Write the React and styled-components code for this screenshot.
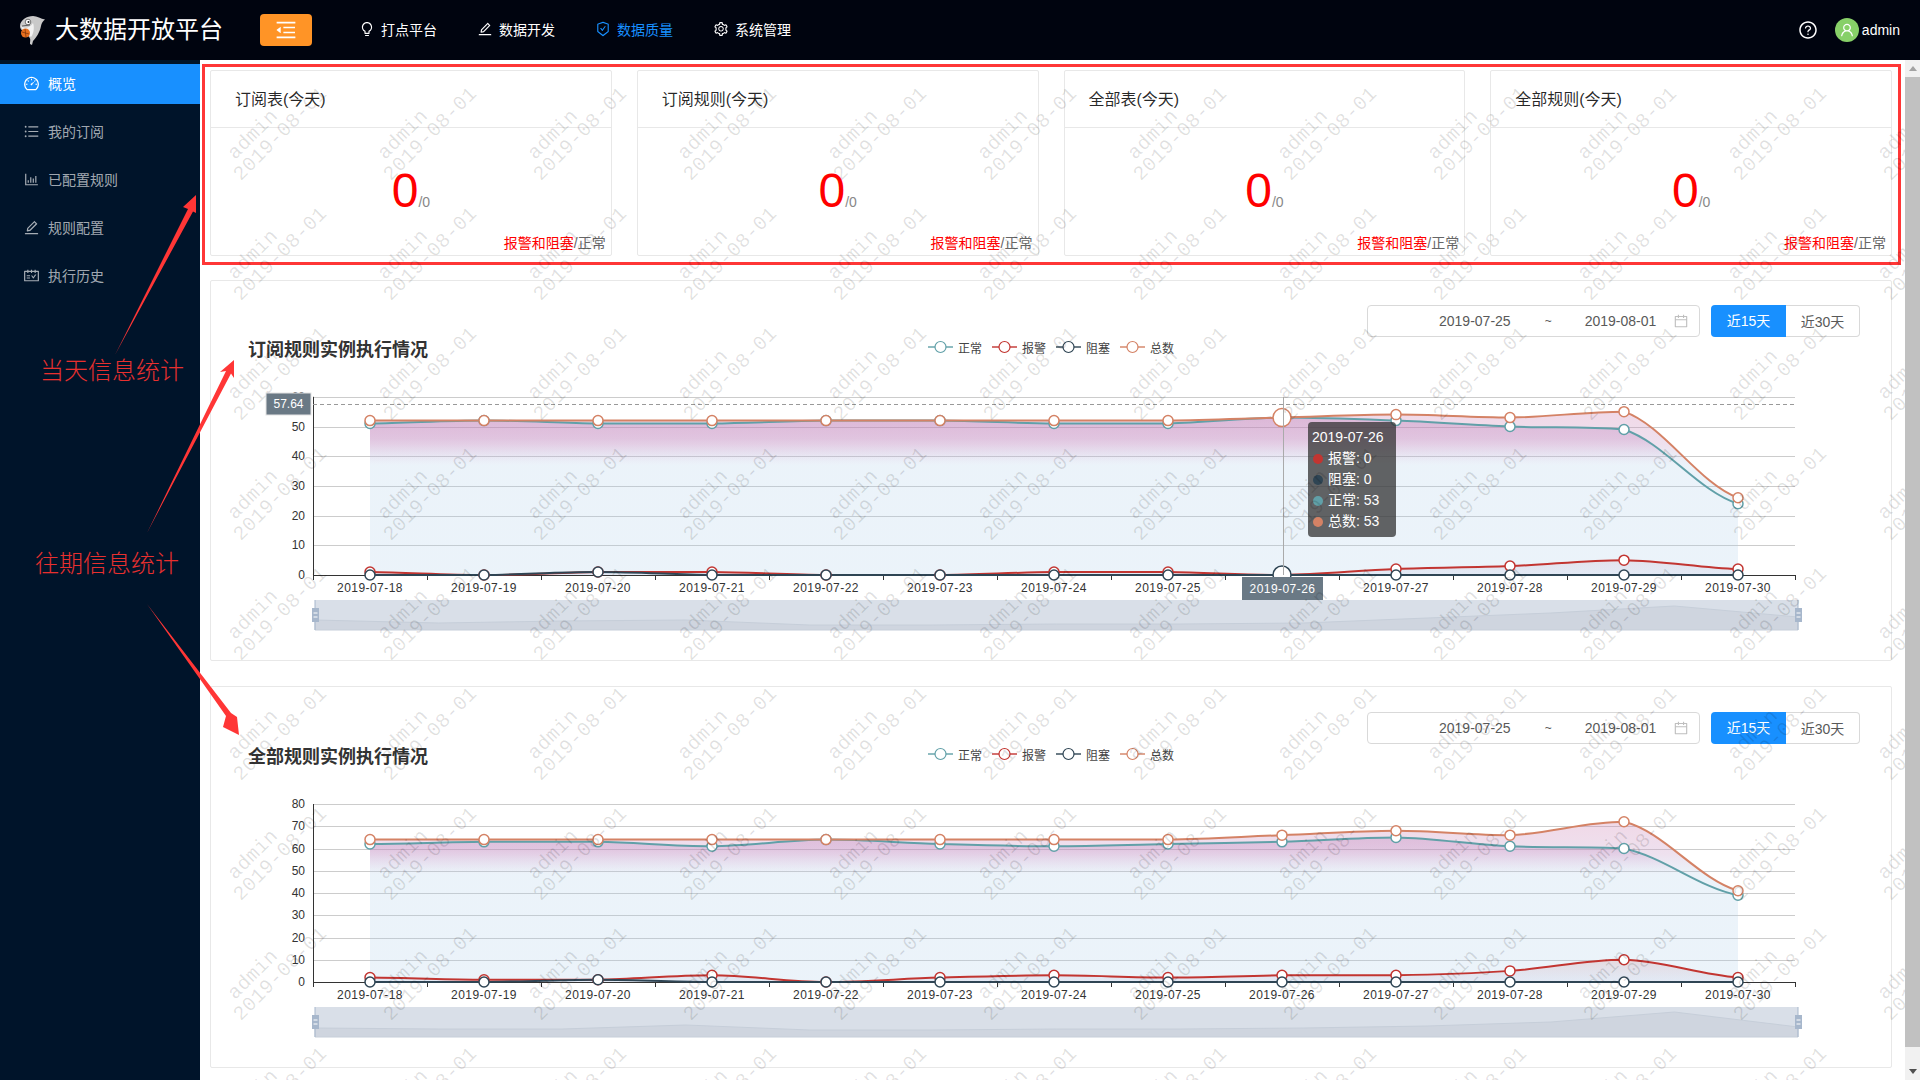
import React from "react";
import styled, { createGlobalStyle } from "styled-components";
import {
  AiOutlineBarChart,
  AiOutlineBars,
  AiOutlineBulb,
  AiOutlineCalendar,
  AiOutlineDashboard,
  AiOutlineEdit,
  AiOutlineMenuFold,
  AiOutlineQuestionCircle,
  AiOutlineSafetyCertificate,
  AiOutlineSchedule,
  AiOutlineSetting,
  AiOutlineUser,
} from "react-icons/ai";

const FONT = `"Liberation Sans", "Noto Sans CJK SC", sans-serif`;

const GlobalStyle = createGlobalStyle`
  html, body {
    margin: 0;
    height: 100%;
    overflow: hidden;
    background: #fff;
    font-family: ${FONT};
  }
  * { box-sizing: border-box; }
`;

const Page = styled.div`
  position: relative;
  width: 1920px;
  height: 1080px;
  display: flex;
  flex-direction: column;
  overflow: hidden;
`;

/* header */
const TopBar = styled.header`
  height: 60px;
  flex: none;
  display: flex;
  align-items: center;
  background: #00040f;
  color: #fff;
`;
const Logo = styled.svg`
  width: 31px;
  height: 31px;
  margin-left: 15px;
  flex: none;
`;
const Brand = styled.div`
  margin-left: 9px;
  width: 205px;
  font-size: 24px;
  line-height: 60px;
  white-space: nowrap;
`;
const FoldButton = styled.div`
  width: 52px;
  height: 32px;
  display: flex;
  align-items: center;
  justify-content: center;
  background: #ff9426;
  border-radius: 4px;
  font-size: 24px;
`;
const TopNav = styled.nav`
  display: flex;
  margin-left: 47px;
  gap: 40px;
  padding-bottom: 2px;
`;
const TopNavItem = styled.div`
  display: flex;
  align-items: center;
  gap: 6px;
  font-size: 14px;
  color: ${(p) => (p.$active ? "#1890ff" : "#fff")};
`;
const TopRight = styled.div`
  margin-left: auto;
  display: flex;
  align-items: center;
  padding-right: 20px;
  font-size: 14px;
`;
const HelpIcon = styled(AiOutlineQuestionCircle)`
  font-size: 20px;
  margin-right: 17px;
`;
const Avatar = styled.div`
  width: 24px;
  height: 24px;
  border-radius: 50%;
  background: #87d068;
  display: flex;
  align-items: center;
  justify-content: center;
  font-size: 16px;
  margin-right: 3px;
`;

/* sidebar */
const Body = styled.div`
  flex: 1;
  min-height: 0;
  display: flex;
`;
const Sidebar = styled.aside`
  width: 200px;
  flex: none;
  background: #00142a;
  padding-top: 4px;
`;
const MenuItem = styled.div`
  height: 40px;
  margin-bottom: 8px;
  padding: 0 0 2px 23px;
  display: flex;
  align-items: center;
  gap: 8px;
  font-size: 14px;
  color: ${(p) => (p.$active ? "#fff" : "rgba(255,255,255,0.65)")};
  background: ${(p) => (p.$active ? "#1890ff" : "transparent")};
`;

/* main */
const Main = styled.main`
  position: relative;
  flex: 1;
  min-width: 0;
  overflow: hidden;
  background: #fff;
`;
const StatFrame = styled.section`
  margin: 4px 4px 0 2px;
  padding: 3px 6px 6px 5px;
  border: 3px solid #ff3636;
  display: grid;
  grid-template-columns: repeat(4, 1fr);
  gap: 25px;
`;
const StatCard = styled.div`
  height: 186px;
  border: 1px solid #e8e8e8;
  border-radius: 2px;
  display: flex;
  flex-direction: column;
`;
const StatTitle = styled.div`
  height: 57px;
  flex: none;
  padding-left: 24px;
  border-bottom: 1px solid #e8e8e8;
  font-size: 16px;
  line-height: 58px;
  color: rgba(0, 0, 0, 0.85);
`;
const StatValue = styled.div`
  margin-top: 33px;
  height: 60px;
  display: flex;
  align-items: baseline;
  justify-content: center;
  line-height: 60px;
`;
const BigNumber = styled.span`
  font-size: 48px;
  color: #ff0000;
`;
const SmallNumber = styled.span`
  font-size: 14px;
  color: #888;
`;
const StatFoot = styled.div`
  margin-top: auto;
  padding: 0 5px 1px 0;
  text-align: right;
  font-size: 14px;
  line-height: 22px;
  color: #666;
  span {
    color: #ff0000;
  }
`;

const ChartCard = styled.section`
  position: relative;
  margin: ${(p) => p.$top}px 13px 0 10px;
  padding-top: ${(p) => p.$pad}px;
  border: 1px solid #e8e8e8;
  border-radius: 2px;
`;
const Controls = styled.div`
  display: flex;
  justify-content: flex-end;
  gap: 11px;
  padding-right: 31px;
`;
const RangePicker = styled.div`
  width: 333px;
  height: 32px;
  padding: 0 10px 0 71px;
  display: flex;
  align-items: center;
  border: 1px solid #d9d9d9;
  border-radius: 4px;
  font-size: 14px;
  color: #595959;
  svg {
    margin-left: auto;
    color: #bfbfbf;
    font-size: 16px;
  }
`;
const RangeDash = styled.span`
  margin: 0 35px 0 34px;
  width: 5px;
  font-size: 12px;
  text-align: center;
`;
const SpanGroup = styled.div`
  display: flex;
`;
const SpanButton = styled.div`
  width: ${(p) => (p.$active ? 75 : 74)}px;
  height: 32px;
  text-align: center;
  font-size: 14px;
  line-height: 32px;
  color: ${(p) => (p.$active ? "#fff" : "#595959")};
  background: ${(p) => (p.$active ? "#1890ff" : "#fff")};
  border: ${(p) => (p.$active ? "none" : "1px solid #d9d9d9")};
  border-left: none;
  border-radius: ${(p) => (p.$active ? "4px 0 0 4px" : "0 4px 4px 0")};
`;
const TitleRow = styled.div`
  height: 24px;
  padding: 2px 0 0 37px;
  display: flex;
  align-items: center;
`;
const ChartTitle = styled.h3`
  margin: 0;
  width: 180px;
  font-size: 18px;
  font-weight: 700;
  line-height: 24px;
  color: #333;
`;
const Legend = styled.div`
  margin: -6px 0 0 500px;
  display: flex;
  gap: 10px;
`;
const LegendItem = styled.div`
  display: flex;
  align-items: center;
  gap: 5px;
  font-size: 12px;
  color: #444;
`;
const Plot = styled.svg`
  display: block;
  width: 1680px;
  height: 299px;
`;
const Tooltip = styled.div`
  position: absolute;
  left: 1097px;
  top: 141px;
  width: 88px;
  height: 115px;
  padding: 5px 4px;
  border-radius: 4px;
  background: rgba(50, 50, 50, 0.75);
  color: #fff;
  font-size: 14px;
  line-height: 21px;
  white-space: nowrap;
`;
const TipRow = styled.div`
  display: flex;
  align-items: center;
  gap: 5px;
  &::before {
    content: "";
    width: 10px;
    height: 10px;
    margin-left: 1px;
    border-radius: 50%;
    background: ${(p) => p.$color};
  }
`;

/* scrollbar strip */
const ScrollStrip = styled.div`
  width: 15px;
  flex: none;
  display: flex;
  flex-direction: column;
  background: #f1f1f1;
`;
const ScrollArrow = styled.div`
  height: 17px;
  flex: none;
  display: flex;
  align-items: center;
  justify-content: center;
  &::before {
    content: "";
    border-left: 4px solid transparent;
    border-right: 4px solid transparent;
    ${(p) => (p.$down ? "border-top: 5px solid #505050;" : "border-bottom: 5px solid #a3a3a3;")}
  }
`;
const ScrollThumb = styled.div`
  flex: 1;
  margin-bottom: 16px;
  background: #c1c1c1;
`;

/* watermark + notes lying over the page */
const Watermark = styled.div`
  position: absolute;
  inset: 7px 0 0 -1px;
  display: grid;
  grid-template-columns: repeat(12, 150px);
  grid-auto-rows: 120px;
  pointer-events: none;
`;
const MarkTile = styled.div`
  display: flex;
  flex-direction: column;
  align-items: flex-start;
  justify-content: center;
  width: 124px;
  justify-self: center;
  align-self: center;
  transform: rotate(-45deg);
  font-family: "Liberation Mono", monospace;
  font-size: 20px;
  line-height: 19px;
  letter-spacing: 0.3px;
  white-space: nowrap;
  color: rgba(0, 0, 0, 0.12);
  span:first-child {
    margin-left: 11px;
  }
`;
const NoteArrows = styled.svg`
  position: absolute;
  left: 0;
  top: 0;
  width: 1920px;
  height: 1080px;
  pointer-events: none;
`;
const NoteText = styled.div`
  position: absolute;
  left: ${(p) => p.$x}px;
  top: ${(p) => p.$y}px;
  font-size: 24px;
  line-height: 30px;
  font-weight: 300;
  color: #e8302f;
  white-space: nowrap;
`;

const COLORS = { normal: "#61a0a8", alarm: "#c23531", block: "#2f4554", total: "#d48265" };
const DATES = ["07-18", "07-19", "07-20", "07-21", "07-22", "07-23", "07-24", "07-25", "07-26", "07-27", "07-28", "07-29", "07-30"].map(
  (d) => `2019-${d}`
);

const CHART_A = {
  id: "a",
  y0: 575,
  unit: 2.97,
  max: 60,
  top: 361,
  gradTop: 412,
  data: {
    normal: [51, 52, 51, 51, 52, 52, 51, 51, 53, 52, 50, 49, 24],
    alarm: [1, 0, 1, 1, 0, 0, 1, 1, 0, 2, 3, 5, 2],
    block: [0, 0, 1, 0, 0, 0, 0, 0, 0, 0, 0, 0, 0],
    total: [52, 52, 52, 52, 52, 52, 52, 52, 53, 54, 53, 55, 26],
  },
  mini: [10, 7, 9, 10, 5, 5, 6, 6, 7, 12, 17, 24, 13],
  zoomY: 600,
  hover: true,
};
const CHART_B = {
  id: "b",
  y0: 982,
  unit: 2.225,
  max: 80,
  top: 768,
  gradTop: 822,
  data: {
    normal: [62, 63, 63, 61, 64, 62, 61, 62, 63, 65, 61, 60, 39],
    alarm: [2, 1, 1, 3, 0, 2, 3, 2, 3, 3, 5, 10, 2],
    block: [0, 0, 1, 0, 0, 0, 0, 0, 0, 0, 0, 0, 0],
    total: [64, 64, 64, 64, 64, 64, 64, 64, 66, 68, 66, 72, 41],
  },
  mini: [9, 8, 8, 12, 7, 7, 8, 8, 9, 11, 15, 25, 10],
  zoomY: 1007,
  hover: false,
};

const AXIS_X = 313;
const BAND = 114;
const catX = (i) => AXIS_X + BAND * i + BAND / 2;

// echarts-ish smooth line through the points
function smooth(points) {
  let d = `M${points[0][0]} ${points[0][1]}`;
  for (let i = 0; i < points.length - 1; i++) {
    const p0 = points[Math.max(i - 1, 0)];
    const p1 = points[i];
    const p2 = points[i + 1];
    const p3 = points[Math.min(i + 2, points.length - 1)];
    const k = 0.17;
    const lo = Math.min(p1[1], p2[1]);
    const hi = Math.max(p1[1], p2[1]);
    const c1y = Math.min(hi, Math.max(lo, p1[1] + (p2[1] - p0[1]) * k));
    const c2y = Math.min(hi, Math.max(lo, p2[1] - (p3[1] - p1[1]) * k));
    d += ` C${p1[0] + BAND * 0.35} ${c1y} ${p2[0] - BAND * 0.35} ${c2y} ${p2[0]} ${p2[1]}`;
  }
  return d;
}

function Chart({ cfg }) {
  const y = (v) => cfg.y0 - v * cfg.unit;
  const pts = (k) => cfg.data[k].map((v, i) => [catX(i), y(v)]);
  const area = (k) => `${smooth(pts(k))} L${catX(12)} ${cfg.y0} L${catX(0)} ${cfg.y0} Z`;
  const ticks = [];
  for (let v = 0; v <= cfg.max; v += 10) ticks.push(v);
  const zoomW = 1483;
  const miniPts = cfg.mini.map((h, i) => `${315 + (i * zoomW) / 12},${cfg.zoomY + 30 - h}`).join(" ");
  const right = AXIS_X + BAND * 13;

  return (
    <Plot viewBox={`211 ${cfg.top} 1680 299`}>
      <defs>
        <linearGradient id={`${cfg.id}-total`} gradientUnits="userSpaceOnUse" x1="0" x2="0" y1={cfg.gradTop} y2={cfg.y0}>
          <stop offset="0" stopColor="#cf7fb0" stopOpacity="0.3" />
          <stop offset="0.2" stopColor="#c79ac8" stopOpacity="0.3" />
          <stop offset="0.33" stopColor="#a9cbe8" stopOpacity="0.23" />
          <stop offset="1" stopColor="#a9cbe8" stopOpacity="0.23" />
        </linearGradient>
        <linearGradient id={`${cfg.id}-normal`} gradientUnits="userSpaceOnUse" x1="0" x2="0" y1={cfg.gradTop + 8} y2={cfg.y0}>
          <stop offset="0" stopColor="#b878b8" stopOpacity="0.34" />
          <stop offset="0.12" stopColor="#b878b8" stopOpacity="0.26" />
          <stop offset="0.28" stopColor="#b8b8e0" stopOpacity="0" />
        </linearGradient>
        <linearGradient id={`${cfg.id}-alarm`} gradientUnits="userSpaceOnUse" x1="0" x2="0" y1={y(10)} y2={cfg.y0}>
          <stop offset="0" stopColor="#c23531" stopOpacity="0.14" />
          <stop offset="1" stopColor="#8080c0" stopOpacity="0.08" />
        </linearGradient>
      </defs>

      {ticks.map((v) => (
        <line key={v} x1={AXIS_X} x2={right} y1={Math.round(y(v)) + 0.5} y2={Math.round(y(v)) + 0.5} stroke="#ccc" />
      ))}
      <path d={area("total")} fill={`url(#${cfg.id}-total)`} />
      <path d={area("normal")} fill={`url(#${cfg.id}-normal)`} />
      <path d={area("alarm")} fill={`url(#${cfg.id}-alarm)`} />

      <line x1={AXIS_X + 0.5} x2={AXIS_X + 0.5} y1={y(cfg.max)} y2={cfg.y0} stroke="#333" />
      <line x1={AXIS_X} x2={right} y1={cfg.y0 + 0.5} y2={cfg.y0 + 0.5} stroke="#333" />
      {DATES.concat("").map((d, i) => (
        <line key={i} x1={AXIS_X + BAND * i + 0.5} x2={AXIS_X + BAND * i + 0.5} y1={cfg.y0} y2={cfg.y0 + 5} stroke="#333" />
      ))}
      {ticks.map((v) => (
        <text key={v} x="305" y={y(v) + 4} textAnchor="end" fontSize="12" fill="#333" fontFamily={FONT}>
          {v}
        </text>
      ))}
      {DATES.map((d, i) => (
        <text key={d} x={catX(i)} y={cfg.y0 + 17} textAnchor="middle" fontSize="12" letterSpacing="0.45" fill="#333" fontFamily={FONT}>
          {d}
        </text>
      ))}

      {["normal", "alarm", "block", "total"].map((k) => (
        <path key={k} d={smooth(pts(k))} fill="none" stroke={COLORS[k]} strokeWidth="2" />
      ))}
      {["normal", "alarm", "block", "total"].map((k) =>
        pts(k).map(([px, py], i) => {
          const big = cfg.hover && i === 8 && (k === "total" || k === "block");
          return <circle key={k + i} cx={px} cy={py} r={big ? 9 : 5} fill="#fff" stroke={COLORS[k]} strokeWidth="1.5" />;
        })
      )}

      {/* data zoom */}
      <rect x="315" y={cfg.zoomY} width={zoomW} height="30" fill="#d9dfe8" />
      <polygon points={`315,${cfg.zoomY + 30} ${miniPts} ${315 + zoomW},${cfg.zoomY + 30}`} fill="#cfd5df" stroke="#c6ced9" />
      {[315, 315 + zoomW].map((hx) => (
        <g key={hx}>
          <line x1={hx} x2={hx} y1={cfg.zoomY} y2={cfg.zoomY + 30} stroke="#a7b7cc" />
          <rect x={hx - 3} y={cfg.zoomY + 8} width="7" height="14" fill="#a7b7cc" />
          <line x1={hx - 1.5} x2={hx + 2.5} y1={cfg.zoomY + 13} y2={cfg.zoomY + 13} stroke="#fff" />
          <line x1={hx - 1.5} x2={hx + 2.5} y1={cfg.zoomY + 17} y2={cfg.zoomY + 17} stroke="#fff" />
        </g>
      ))}

      {cfg.hover && (
        <g>
          <line x1="1283.5" x2="1283.5" y1="397" y2="575" stroke="#aaa" />
          <line x1={AXIS_X} x2={right} y1="404.5" y2="404.5" stroke="#999" strokeDasharray="4 3" />
          <rect x="266" y="393" width="45" height="22" fill="#6a7985" stroke="#e4e4e4" />
          <text x="288.5" y="408" textAnchor="middle" fontSize="12" fill="#fff" fontFamily={FONT}>
            57.64
          </text>
          <rect x="1242" y="577" width="81" height="23" fill="#6a7985" />
          <text x="1282.5" y="593" textAnchor="middle" fontSize="12" letterSpacing="0.45" fill="#fff" fontFamily={FONT}>
            2019-07-26
          </text>
        </g>
      )}
    </Plot>
  );
}

const LEGEND = [
  ["正常", COLORS.normal],
  ["报警", COLORS.alarm],
  ["阻塞", COLORS.block],
  ["总数", COLORS.total],
];

function ChartPanel({ title, cfg, top, pad, children }) {
  return (
    <ChartCard $top={top} $pad={pad}>
      <Controls>
        <RangePicker>
          <span>2019-07-25</span>
          <RangeDash>~</RangeDash>
          <span>2019-08-01</span>
          <AiOutlineCalendar />
        </RangePicker>
        <SpanGroup>
          <SpanButton $active>近15天</SpanButton>
          <SpanButton>近30天</SpanButton>
        </SpanGroup>
      </Controls>
      <TitleRow>
        <ChartTitle>{title}</ChartTitle>
        <Legend>
          {LEGEND.map(([name, color]) => (
            <LegendItem key={name}>
              <svg width="25" height="14" viewBox="0 0 25 14">
                <line x1="0" x2="25" y1="7" y2="7" stroke={color} strokeWidth="2" opacity="0.7" />
                <circle cx="12.5" cy="7" r="5.5" fill="#fff" stroke={color} strokeWidth="1.2" />
              </svg>
              {name}
            </LegendItem>
          ))}
        </Legend>
      </TitleRow>
      <Chart cfg={cfg} />
      {children}
    </ChartCard>
  );
}

const STATS = ["订阅表(今天)", "订阅规则(今天)", "全部表(今天)", "全部规则(今天)"];
const SIDE_MENU = [
  ["概览", AiOutlineDashboard],
  ["我的订阅", AiOutlineBars],
  ["已配置规则", AiOutlineBarChart],
  ["规则配置", AiOutlineEdit],
  ["执行历史", AiOutlineSchedule],
];
const TOP_MENU = [
  ["打点平台", AiOutlineBulb],
  ["数据开发", AiOutlineEdit],
  ["数据质量", AiOutlineSafetyCertificate],
  ["系统管理", AiOutlineSetting],
];

export default function App() {
  return (
    <Page>
      <GlobalStyle />
      <TopBar>
        <Logo viewBox="15 16 31 31">
          <path
            d="M20 27C20 21 27 17 33 17C37 17 41 20 45 20.500C43 22 41.500 24 41 27C40 33 36 39 33 42L32 46L30 45C30 42 31 40 29 38C26 33 20 32 20 27Z"
            fill="#c9c9c9"
          />
          <path d="M21 27C24 30 30 29 33 24C35 29 33 36 31 38C27 34 22 32 21 27Z" fill="#f2f2f2" />
          <circle cx="28" cy="23" r="2.800" fill="#fff" stroke="#555" strokeWidth="0.8" />
          <circle cx="28.500" cy="23" r="1" fill="#222" />
          <path d="M22 27L30 26" stroke="#444" strokeWidth="0.8" />
          <circle cx="25.500" cy="34" r="4.500" fill="#e8701f" />
          <path d="M22 33L29 35M25 30L26 38" stroke="#7a3208" strokeWidth="0.7" />
        </Logo>
        <Brand>大数据开放平台</Brand>
        <FoldButton>
          <AiOutlineMenuFold />
        </FoldButton>
        <TopNav>
          {TOP_MENU.map(([label, Icon], i) => (
            <TopNavItem key={label} $active={i === 2}>
              <Icon size={16} />
              {label}
            </TopNavItem>
          ))}
        </TopNav>
        <TopRight>
          <HelpIcon />
          <Avatar>
            <AiOutlineUser />
          </Avatar>
          admin
        </TopRight>
      </TopBar>

      <Body>
        <Sidebar>
          {SIDE_MENU.map(([label, Icon], i) => (
            <MenuItem key={label} $active={i === 0}>
              <Icon size={17} />
              {label}
            </MenuItem>
          ))}
        </Sidebar>

        <Main>
          <StatFrame>
            {STATS.map((title) => (
              <StatCard key={title}>
                <StatTitle>{title}</StatTitle>
                <StatValue>
                  <BigNumber>0</BigNumber>
                  <SmallNumber>/0</SmallNumber>
                </StatValue>
                <StatFoot>
                  <span>报警和阻塞</span>/正常
                </StatFoot>
              </StatCard>
            ))}
          </StatFrame>

          <ChartPanel title="订阅规则实例执行情况" cfg={CHART_A} top={15} pad={24}>
            <Tooltip>
              2019-07-26
              <TipRow $color={COLORS.alarm}>报警: 0</TipRow>
              <TipRow $color={COLORS.block}>阻塞: 0</TipRow>
              <TipRow $color={COLORS.normal}>正常: 53</TipRow>
              <TipRow $color={COLORS.total}>总数: 53</TipRow>
            </Tooltip>
          </ChartPanel>
          <ChartPanel title="全部规则实例执行情况" cfg={CHART_B} top={25} pad={25} />

          <Watermark>
            {Array.from({ length: 108 }, (_, i) => (
              <MarkTile key={i}>
                <span>admin</span>
                <span>2019-08-01</span>
              </MarkTile>
            ))}
          </Watermark>
        </Main>

        <ScrollStrip>
          <ScrollArrow />
          <ScrollThumb />
          <ScrollArrow $down />
        </ScrollStrip>
      </Body>

      <NoteArrows viewBox="0 0 1920 1080">
        <polygon points="115,355 188,209 183,207 196,195 196,213 193,211.500" fill="#ff3636" />
        <polygon points="147,533 226,371 220,372 234,360 234,378 231,373.500" fill="#ff3636" />
        <polygon points="147,604 226,716 223,727 239,735 237,717 231,713" fill="#ff3636" />
      </NoteArrows>
      <NoteText $x={40} $y={356}>
        当天信息统计
      </NoteText>
      <NoteText $x={35} $y={549}>
        往期信息统计
      </NoteText>
    </Page>
  );
}
